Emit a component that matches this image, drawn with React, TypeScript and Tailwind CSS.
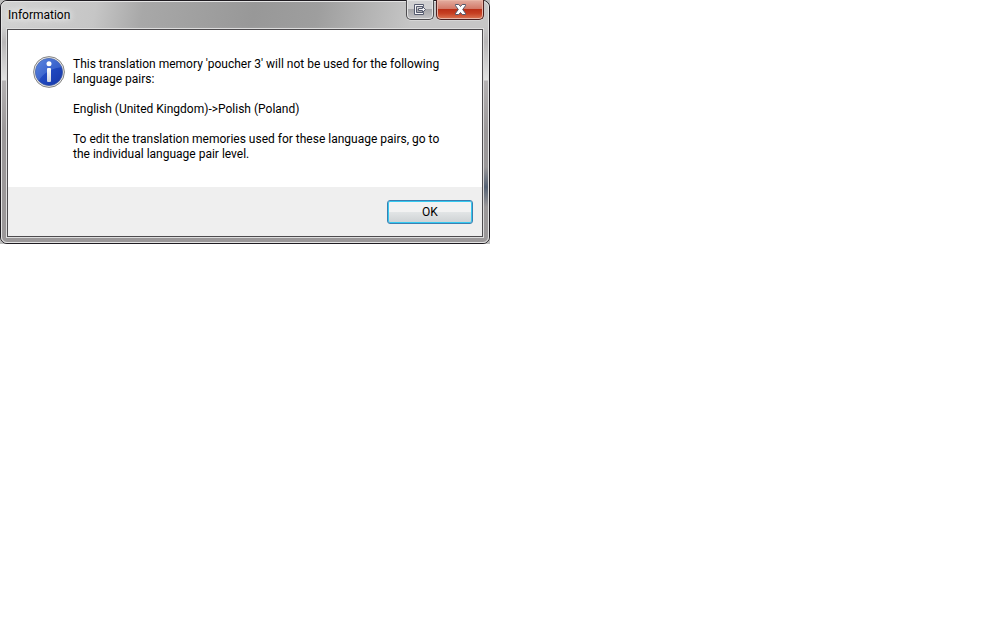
const paragraphs = [
  "This translation memory 'poucher 3' will not be used for the following language pairs:",
  "English (United Kingdom)->Polish (Poland)",
  "To edit the translation memories used for these language pairs, go to the individual language pair level.",
];

const ExitIcon = () => (
  <svg
    width="12"
    height="11"
    viewBox="0 0 12 11"
    fill="#f4f4f6"
    stroke="#555b6e"
    aria-hidden="true"
  >
    <path d="M.5.5h9v2h-7v6h7v2h-9z" />
    <path d="M4.5 4.5H8.5V2.5l3 3-3 3v-2h-4z" />
  </svg>
);

const CloseIcon = () => (
  <svg width="13" height="11" viewBox="0 0 13 11" aria-hidden="true">
    <path
      d="M1.5.5h3.3l1.7 2 1.7-2h3.3v1.2L8.7 5.5l2.8 3.8v1.2H8.2l-1.7-2-1.7 2H1.5V9.3l2.8-3.8-2.8-3.8z"
      fill="#fff"
      stroke="#53586b"
    />
  </svg>
);

const InfoIcon = () => (
  <svg
    className="shrink-0"
    width="32"
    height="32"
    viewBox="0 0 32 32"
    role="img"
    aria-label="Information"
  >
    <defs>
      <linearGradient id="ball" x1="0" y1="0" x2="1" y2="1">
        <stop offset="0" stopColor="#4f7bd8" />
        <stop offset=".5" stopColor="#2049c0" />
        <stop offset="1" stopColor="#1636a8" />
      </linearGradient>
      <linearGradient id="stem" x1="0" y1="0" x2="0" y2="1">
        <stop offset="0" stopColor="#fff" />
        <stop offset="1" stopColor="#ccd2de" />
      </linearGradient>
      <clipPath id="disc">
        <circle cx="16" cy="16" r="13.5" />
      </clipPath>
    </defs>
    <circle cx="16" cy="16" r="15.4" fill="#e6e6e6" stroke="#858585" />
    <circle cx="16" cy="16" r="13.6" fill="url(#ball)" stroke="#38549f" strokeWidth=".7" />
    <path
      d="M0 0h32v11C22 11 10 16 5 26L0 24z"
      fill="#7fa5ee"
      fillOpacity=".3"
      clipPath="url(#disc)"
    />
    <circle cx="16" cy="7.7" r="2.5" fill="#fff" />
    <rect x="14" y="12" width="4" height="14" rx="1" fill="url(#stem)" />
  </svg>
);

const TitleBar = () => (
  <header className="flex h-[26px] items-start justify-between">
    <h1 className="pt-1 text-[12px] leading-[18px] [text-shadow:0_0_6px_#fff,0_0_10px_#fff]">
      Information
    </h1>
    <div className="-mt-0.5 flex gap-0.5">
      <button
        type="button"
        aria-label="Exit"
        className="flex h-5 w-7 items-center justify-center rounded-b-[5px] border border-t-0 border-[#4c4b4e] bg-linear-to-b from-[#d0d0d1] from-50% via-[#a5a5a8] via-50% to-[#c3c3c5] shadow-[inset_0_0_0_1px_#e3e3e3,0_1px_0_#d6d6d6]"
      >
        <ExitIcon />
      </button>
      <button
        type="button"
        aria-label="Close"
        className="flex h-5 w-12 items-center justify-center rounded-b-[5px] border border-t-0 border-[#4b2020] bg-[linear-gradient(180deg,#e3ada0_0%,#d27766_48%,#bb3018_50%,#c63f22_70%,#dc7755_100%)] shadow-[inset_0_0_0_1px_#e9b5a6,0_1px_0_#d6d6d6]"
      >
        <CloseIcon />
      </button>
    </div>
  </header>
);

const App = () => {
  return (
    <main className="min-h-screen bg-white font-['Roboto','Noto_Sans',sans-serif] text-black">
      <div className="w-full max-w-[490px] bg-[#bdbdbd]">
        <section
          role="dialog"
          aria-label="Information"
          className="rounded-[7px] border border-[#1f1c21] bg-[linear-gradient(100deg,#d2d2d2_0%,#c6c6c6_18%,#a8a8a8_27%,#989898_48%,#9e9e9e_60%,#c6c6c6_78%,#c6c6c6_100%)]"
        >
          <div className="rounded-md border border-[#e4e4e4] [background:linear-gradient(180deg,transparent_165px,#566274_185px,transparent_205px)_right/5px_100%_no-repeat,linear-gradient(180deg,transparent_24px,#b8b6b7_40px,#e2e2e2_78px,#b4b1b2_79px,#9b9899_130px,#9b9899_100%)] px-1 pb-1">
            <div className="pl-0.5">
              <TitleBar />
            </div>
            <div className="border border-[#dddddd]">
              <div className="border border-[#4d4b4e] bg-white">
                <div className="flex gap-2 pt-[26px] pr-8 pb-[25px] pl-[25px]">
                  <InfoIcon />
                  <div className="space-y-[15px] pt-px text-[12px] leading-[15px]">
                    {paragraphs.map((text) => (
                      <p key={text}>{text}</p>
                    ))}
                  </div>
                </div>
                <footer className="flex justify-end bg-[#efefef] pt-[13px] pr-[9px] pb-3">
                  <button
                    type="button"
                    className="h-6 w-[86px] rounded-[3px] border border-[#3c7fb1] bg-linear-to-b from-[#f2f2f2] from-50% via-[#e2e5e6] via-50% to-[#cdd1d3] text-[12px] leading-[20px] shadow-[inset_0_0_0_1px_#35c9f0]"
                  >
                    OK
                  </button>
                </footer>
              </div>
            </div>
          </div>
        </section>
      </div>
    </main>
  );
};
export default App;
